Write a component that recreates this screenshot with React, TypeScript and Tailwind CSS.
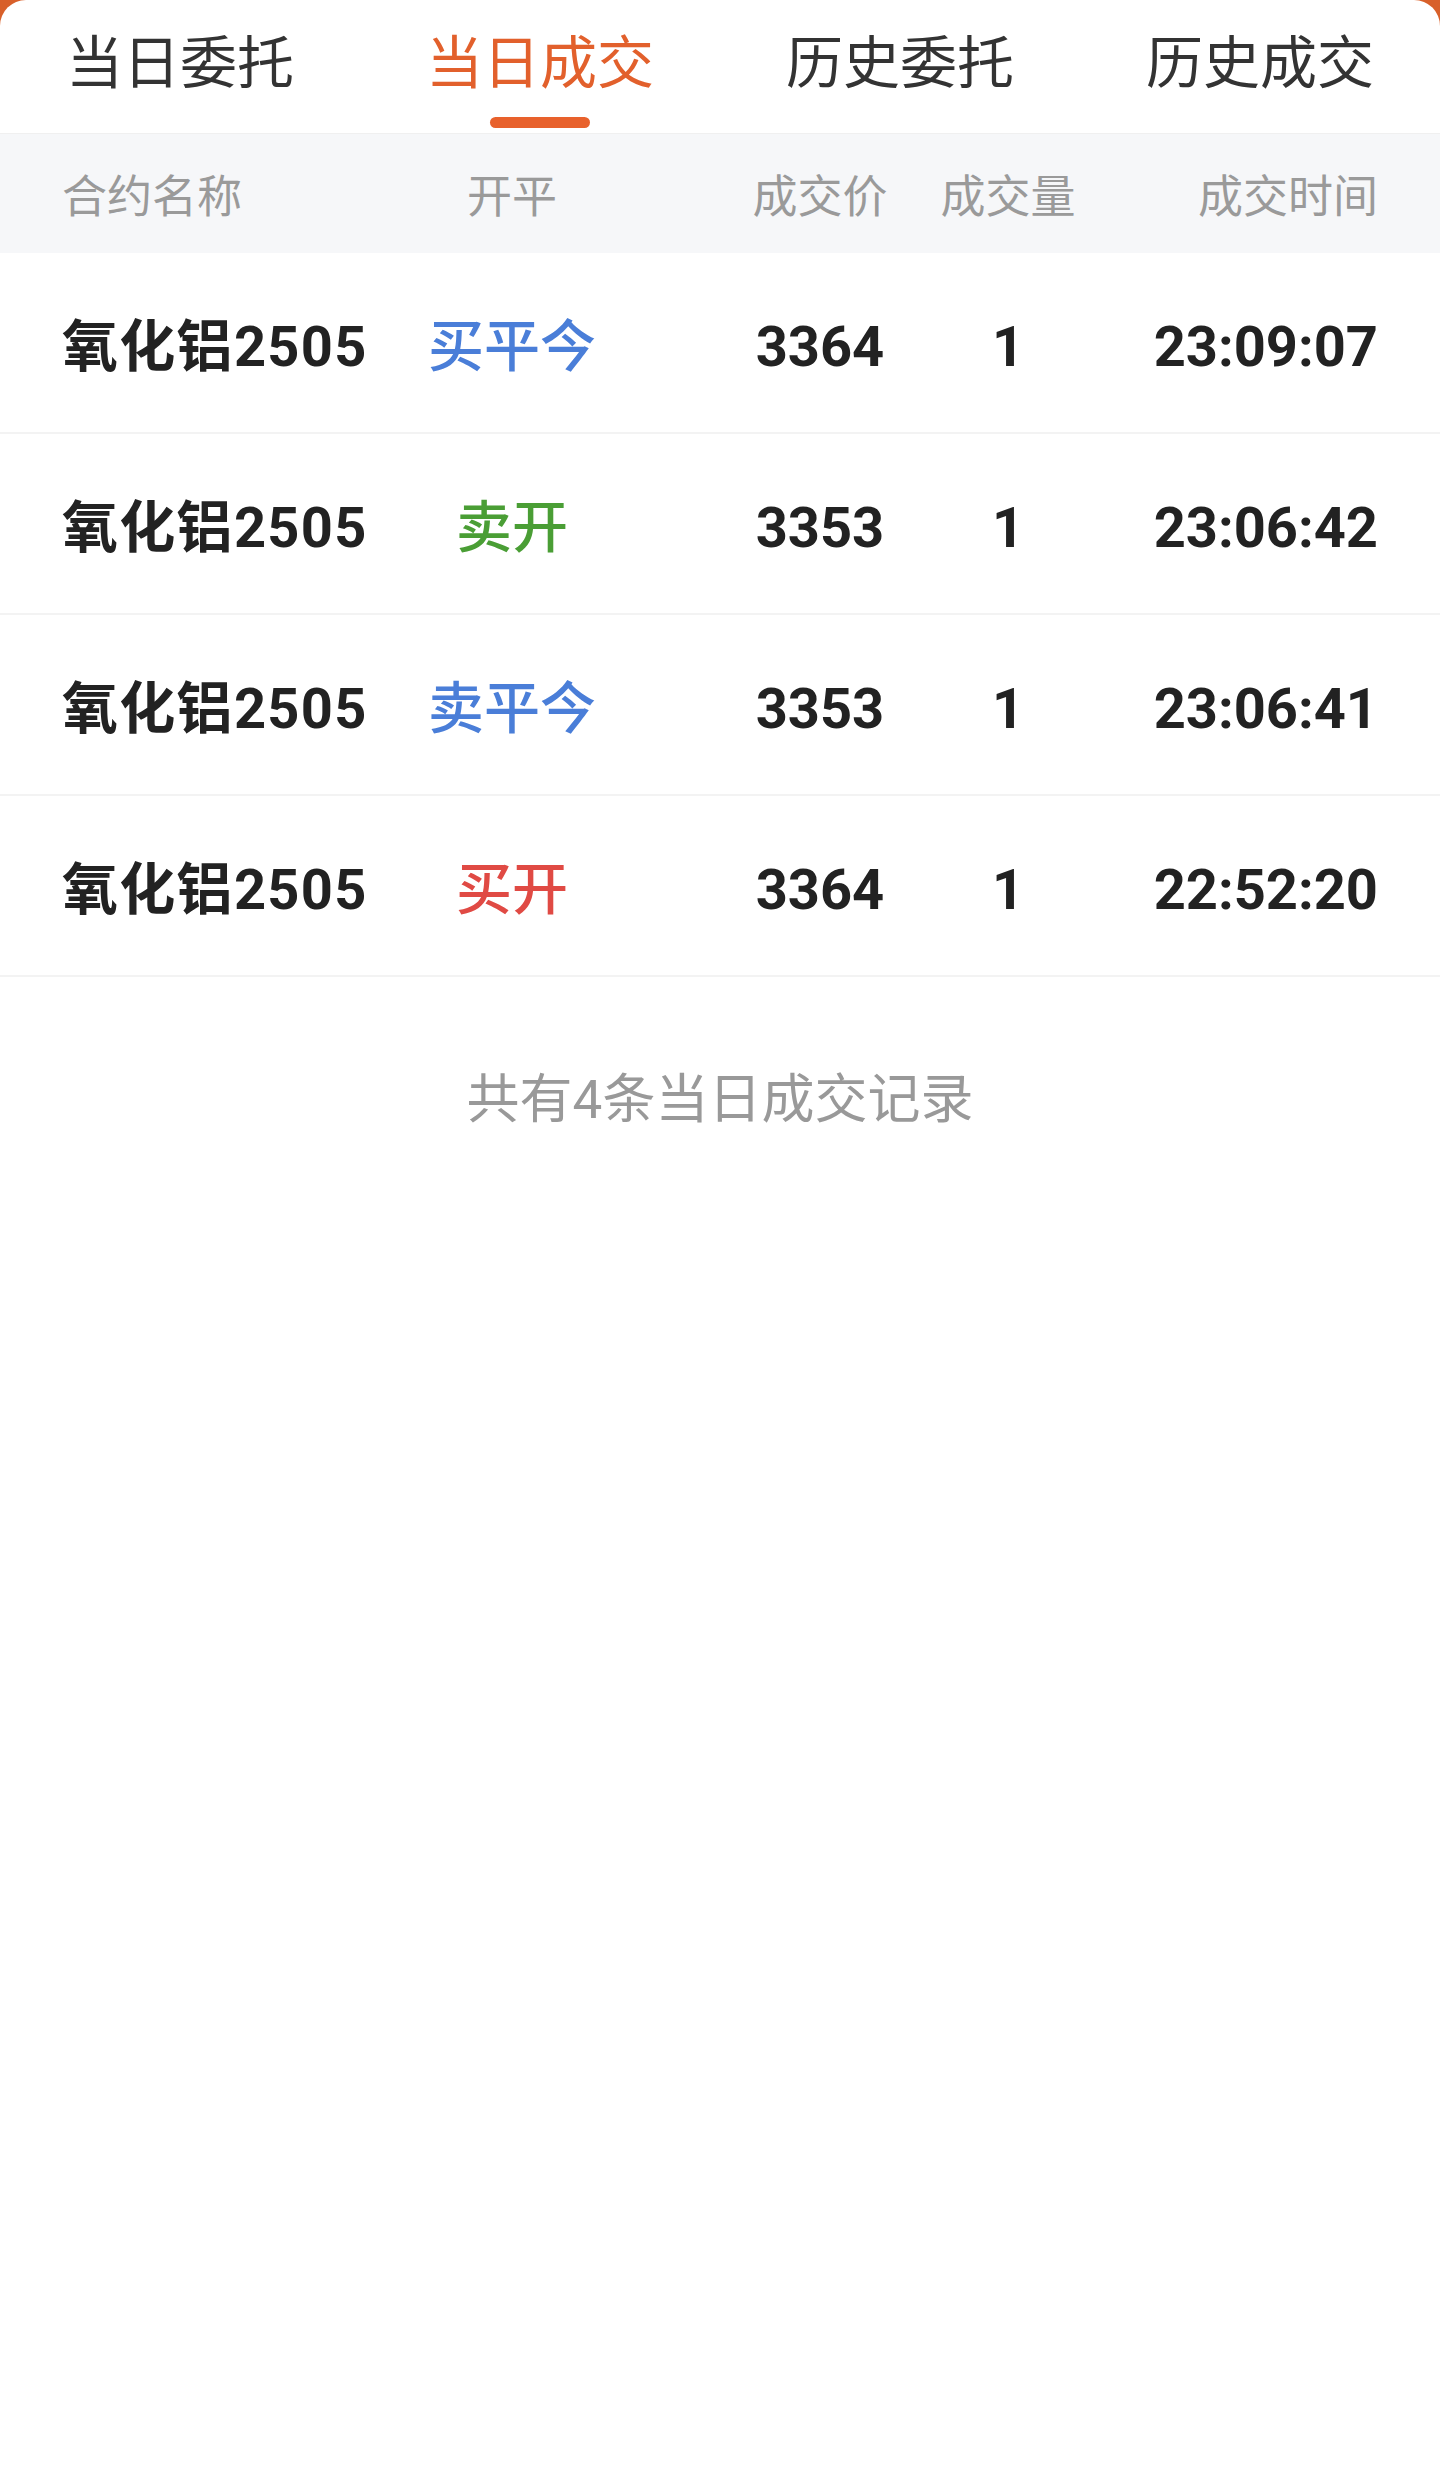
const tabs = ["当日委托", "当日成交", "历史委托", "历史成交"];

type Trade = {
  name: string;
  action: string;
  tone: "blue" | "green" | "red";
  price: string;
  qty: string;
  time: string;
};

const trades: Trade[] = [
  { name: "氧化铝2505", action: "买平今", tone: "blue", price: "3364", qty: "1", time: "23:09:07" },
  { name: "氧化铝2505", action: "卖开", tone: "green", price: "3353", qty: "1", time: "23:06:42" },
  { name: "氧化铝2505", action: "卖平今", tone: "blue", price: "3353", qty: "1", time: "23:06:41" },
  { name: "氧化铝2505", action: "买开", tone: "red", price: "3364", qty: "1", time: "22:52:20" },
];

const toneClass = {
  blue: "text-[#4a7ed8]",
  green: "text-[#4a9e35]",
  red: "text-[#e04a44]",
};

const cols = "grid grid-cols-[300px_300px_316px_60px_1fr] items-center px-[62px] whitespace-nowrap";

export default function App() {
  const active = 1;
  return (
    <div
      className="bg-[#d8602a]"
      style={{ fontFamily: "Roboto, 'Noto Sans CJK SC', sans-serif" }}
    >
      <div className="min-h-[2481px] bg-white rounded-t-[26px]">
        {/* tabs */}
        <div className="grid grid-cols-4 h-[134px] border-b border-[#f0f0f0]">
          {tabs.map((t, i) => (
            <div key={t} className="flex flex-col items-center pt-[35px]">
              <span
                className={`text-[57px] leading-none ${
                  i === active ? "text-[#e2602c]" : "text-[#333333]"
                }`}
              >
                {t}
              </span>
              {i === active && (
                <span className="mt-[25px] h-[11px] w-[100px] rounded-full bg-[#e8612c]" />
              )}
            </div>
          ))}
        </div>

        {/* header */}
        <div className={`${cols} h-[119px] pt-[8px] bg-[#f6f7f9] text-[45px] leading-none text-[#9a9a9a]`}>
          <span>合约名称</span>
          <span className="flex justify-center">开平</span>
          <span className="flex justify-center">成交价</span>
          <span className="flex justify-center">成交量</span>
          <span className="flex justify-end">成交时间</span>
        </div>

        {/* rows */}
        {trades.map((r, i) => (
          <div
            key={i}
            className={`${cols} h-[181px] pt-[9px] border-b-2 border-[#f3f3f3] text-[56px] leading-none`}
          >
            <span className="font-bold tracking-[1.3px] text-[#222222]">{r.name}</span>
            <span className={`flex justify-center font-medium ${toneClass[r.tone]}`}>{r.action}</span>
            <span className="flex justify-center font-bold text-[#222222]">{r.price}</span>
            <span className="flex justify-center font-bold text-[#222222]">{r.qty}</span>
            <span className="flex justify-end font-bold text-[#222222]">{r.time}</span>
          </div>
        ))}

        <p className="pt-[97px] text-center text-[53px] leading-none text-[#999999]">
          共有4条当日成交记录
        </p>
      </div>
    </div>
  );
}
